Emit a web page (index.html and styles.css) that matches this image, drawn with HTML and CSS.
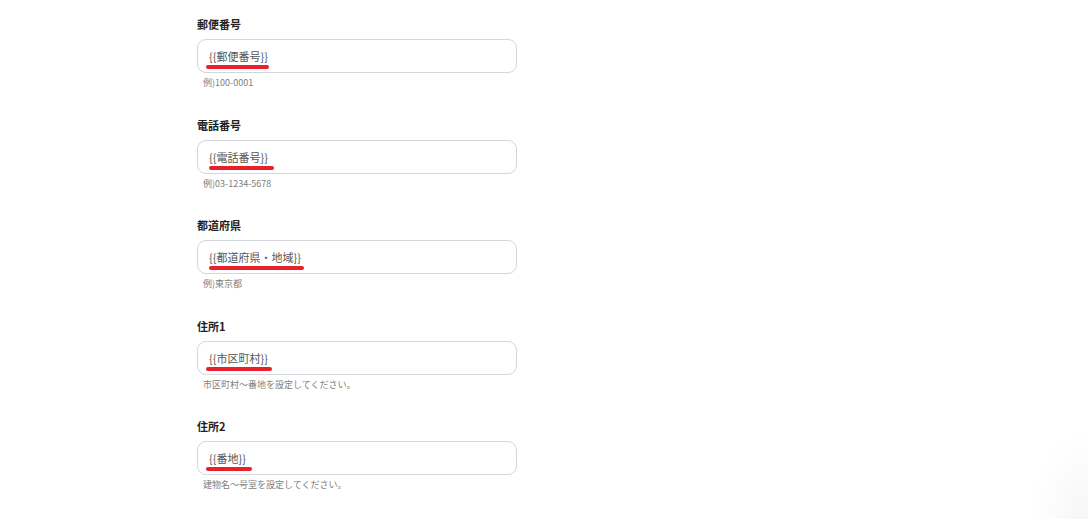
FILE: index.html
```html
<!DOCTYPE html>
<html lang="ja">
<head>
<meta charset="utf-8">
<link rel="stylesheet" href="styles.css">
</head>
<body>
<div class="form">
  <div class="field">
    <div class="label">郵便番号</div>
    <div class="input"><span class="value">{{郵便番号}}</span><span class="mark" style="left:8px;width:63px"></span></div>
    <div class="help">例)100-0001</div>
  </div>
  <div class="field">
    <div class="label">電話番号</div>
    <div class="input"><span class="value">{{電話番号}}</span><span class="mark" style="left:11px;width:65px"></span></div>
    <div class="help">例)03-1234-5678</div>
  </div>
  <div class="field">
    <div class="label">都道府県</div>
    <div class="input"><span class="value">{{都道府県・地域}}</span><span class="mark" style="left:11px;width:95px"></span></div>
    <div class="help">例)東京都</div>
  </div>
  <div class="field">
    <div class="label">住所1</div>
    <div class="input"><span class="value">{{市区町村}}</span><span class="mark" style="left:8px;width:66px"></span></div>
    <div class="help">市区町村～番地を設定してください。</div>
  </div>
  <div class="field">
    <div class="label">住所2</div>
    <div class="input"><span class="value">{{番地}}</span><span class="mark" style="left:8px;width:46px"></span></div>
    <div class="help">建物名～号室を設定してください。</div>
  </div>
</div>
<div class="corner-shadow"></div>
</body>
</html>
```

FILE: styles.css
```css
html, body {
  margin: 0;
  padding: 0;
  background: #ffffff;
  width: 1088px;
  height: 519px;
  overflow: hidden;
  font-family: "Noto Sans CJK JP", "Noto Sans", "Liberation Sans", sans-serif;
}
body {
  position: relative;
}
.form {
  padding: 16px 0 0 197px;
  width: 320px;
  display: flex;
  flex-direction: column;
  gap: 26.5px;
}
.field {
  display: flex;
  flex-direction: column;
}
.label {
  font-size: 11px;
  font-weight: 700;
  line-height: 17px;
  color: #222222;
}
.input {
  position: relative;
  margin-top: 6px;
  height: 34px;
  box-sizing: border-box;
  border: 1px solid #d3d6dc;
  border-radius: 9px;
  padding: 0 11px;
  display: flex;
  align-items: center;
}
.value {
  font-size: 11px;
  color: #555555;
  line-height: 16px;
}
.mark {
  position: absolute;
  top: 25px;
  height: 4px;
  border-radius: 2px;
  background: #e8202a;
}
.help {
  margin-top: 3px;
  font-size: 9px;
  line-height: 14px;
  color: #808080;
  padding-left: 6px;
}
.corner-shadow {
  position: absolute;
  right: 0;
  bottom: 0;
  width: 60px;
  height: 110px;
  background: radial-gradient(ellipse 60px 90px at 100% 100%, rgba(0,0,0,0.035), rgba(0,0,0,0) 100%);
}
```
